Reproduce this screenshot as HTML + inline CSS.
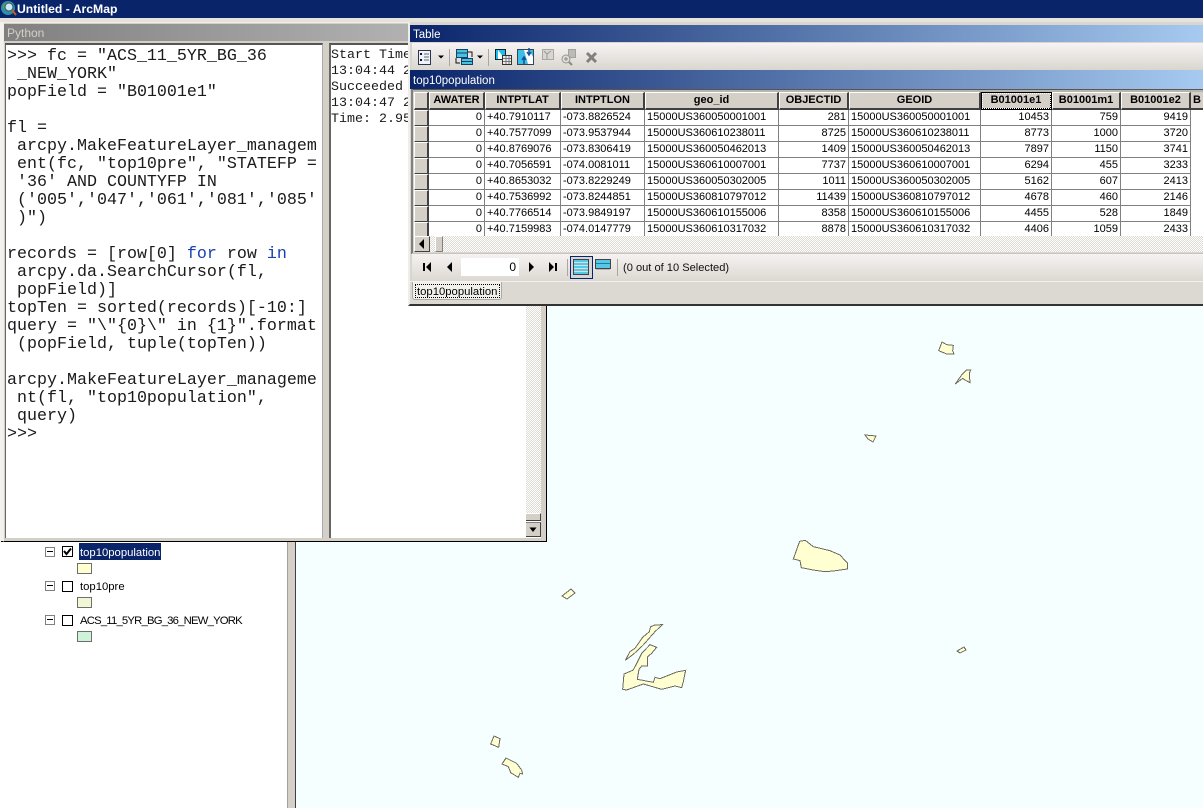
<!DOCTYPE html>
<html><head><meta charset="utf-8"><style>
html,body{margin:0;padding:0;width:1203px;height:808px;overflow:hidden;background:#fff}
*{box-sizing:border-box}
.a{position:absolute}
body{font-family:"Liberation Sans",sans-serif;position:relative;color:#000}
pre{margin:0;font-family:"Liberation Mono",monospace;color:#1a1a1a}
.dith{background-color:#fff;background-image:conic-gradient(#dedbd4 25%,#fff 0 50%,#dedbd4 0 75%,#fff 0);background-size:2px 2px}
table{border-collapse:separate;border-spacing:0;table-layout:fixed;font-size:11px;position:absolute;left:0;top:0;width:777px}
td,th{height:16px;padding:0 2px;overflow:hidden;white-space:nowrap;border-right:1px solid #808080;border-bottom:1px solid #808080;background:#fff;font-weight:normal;line-height:15px}
td.r{text-align:right}
th{height:18px;background:#d4d0c8;font-weight:bold;border-right:2px solid #404040;border-bottom:2px solid #404040;border-top:1px solid #fff;border-left:1px solid #fff;text-align:center;padding:0;line-height:15px}
td.s{background:#d4d0c8;border-right:2px solid #404040;border-bottom:1px solid #404040;border-top:1px solid #fff;border-left:1px solid #fff;padding:0}
.sw{position:absolute;left:77px;width:15px;height:11px;border:1px solid #6e6e6e}
.mn{position:absolute;left:45px;width:10px;height:10px;border:1px solid #808080;background:#fff}
.mn:after{content:"";position:absolute;left:1px;top:3px;width:6px;height:1px;background:#000}
.cb{position:absolute;left:62px;width:11px;height:11px;border:1px solid #000;background:#fff}
.tl{position:absolute;left:80px;font-size:11.3px;line-height:16px;white-space:nowrap}
</style></head><body>

<!-- map -->
<div class="a" style="left:296px;top:300px;width:907px;height:508px;background:#f6ffff"></div>
<div class="a" style="left:287px;top:300px;width:1px;height:508px;background:#a0a0a0"></div>
<div class="a" style="left:288px;top:300px;width:7px;height:508px;background:#d4d0c8"></div>
<div class="a" style="left:295px;top:300px;width:1px;height:508px;background:#404040"></div>
<svg class="a" style="left:0;top:0" width="1203" height="808" fill="#ffffd2" stroke="#6b6b60" stroke-width="1" shape-rendering="crispEdges">
<g transform="translate(600,520) scale(.3333)" stroke-width="3">
<polygon points="599,64 616,61 640,80 690,92 720,105 743,130 742,147 700,153 675,155 640,150 604,143 600,122 580,117"/>
<polygon points="76,421 90,395 105,385 128,352 148,335 152,320 165,315 187,314 165,335 130,375 100,403"/>
<polygon points="150,374 170,382 155,400 143,410 143,438 125,438 117,448 112,478 160,487 165,472 180,476 230,456 257,451 250,485 245,503 225,498 185,508 130,492 80,510 68,508 72,462 100,450 125,400"/>
</g>
<g transform="translate(470,720) scale(.3333)" stroke-width="3">
<polygon points="72,48 90,56 86,82 62,72"/>
<polygon points="108,114 140,130 155,150 158,162 150,160 145,172 122,158 115,140 96,132"/>
</g>
<g transform="translate(920,330) scale(.3333)" stroke-width="3">
<polygon points="66,36 80,44 100,46 98,62 102,72 80,72 56,62"/>
<polygon points="106,162 125,135 140,120 152,120 148,130 150,158 135,150 128,145"/>
</g>
<polygon points="865,435 876,436 873,442 868,439"/>
<polygon points="562,596 571,589 575,593 567,599"/>
<polygon points="957,651 964,647 966,650 960,653"/>
</svg>

<!-- TOC -->
<div class="mn" style="top:547px"></div>
<div class="cb" style="top:546px"><svg width="9" height="9" style="display:block"><path d="M1 4l2.500 3L8 1.500" fill="none" stroke="#000" stroke-width="2"/></svg></div>
<div class="a" style="left:79px;top:543px;width:82px;height:17px;background:#0a246a"></div>
<div class="tl" style="top:545px;color:#fff">top10population</div>
<div class="sw" style="top:563px;background:#ffffd2"></div>
<div class="mn" style="top:581px"></div><div class="cb" style="top:581px"></div>
<div class="tl" style="top:579px">top10pre</div>
<div class="sw" style="top:597px;background:#f1f7d4"></div>
<div class="mn" style="top:615px"></div><div class="cb" style="top:615px"></div>
<div class="tl" style="top:613px;letter-spacing:-.8px">ACS_11_5YR_BG_36_NEW_YORK</div>
<div class="sw" style="top:631px;background:#cdf3d9"></div>

<!-- app title -->
<div class="a" style="left:0;top:0;width:1203px;height:18px;background:#0a246a"></div>
<div class="a" style="left:17px;top:1px;color:#fff;font-weight:bold;font-size:12.2px;line-height:16px">Untitled - ArcMap</div>
<svg class="a" style="left:0;top:0" width="18" height="18">
<circle cx="8" cy="8" r="7" fill="#2f8fa8"/><path d="M3 5q3-3 6-2l1 4-4 3-3-2z" fill="#5aa05a"/><circle cx="9" cy="7" r="4" fill="#cfe8f0" stroke="#33506a"/><path d="M12 10l4 5" stroke="#c06020" stroke-width="2"/>
</svg>
<div class="a" style="left:0;top:18px;width:1203px;height:282px;background:#e6e3dc"></div>
<div class="a" style="left:0;top:22px;width:3px;height:520px;background:#f4f2ee"></div>
<div class="a" style="left:1px;top:541px;width:546px;height:1px;background:#000"></div>

<!-- python window -->
<div class="a" style="left:3px;top:22px;width:544px;height:520px;background:#d4d0c8;border-right:1px solid #000;border-bottom:1px solid #000;border-left:1px solid #f0eee8;border-top:1px solid #f0eee8"></div>
<div class="a" style="left:4px;top:24px;width:541px;height:17px;background:linear-gradient(90deg,#808080,#c2c2c2)"></div>
<div class="a" style="left:7px;top:25px;color:#d4d0c8;font-size:12px;line-height:16px">Python</div>
<div class="a" style="left:5px;top:43px;width:318px;height:495px;background:#fff;border-top:2px solid #555;border-left:1px solid #666;border-right:1px solid #aaa"></div>
<pre class="a" style="left:7px;top:48px;font-size:16.67px;line-height:18px">&gt;&gt;&gt; fc = "ACS_11_5YR_BG_36
 _NEW_YORK"
popField = "B01001e1"

fl =
 arcpy.MakeFeatureLayer_managem
 ent(fc, "top10pre", "STATEFP =
 '36' AND COUNTYFP IN
 ('005','047','061','081','085'
 )")

records = [row[0] <span style="color:#1a3fb0">for</span> row <span style="color:#1a3fb0">in</span>
 arcpy.da.SearchCursor(fl,
 popField)]
topTen = sorted(records)[-10:]
query = "\"{0}\" in {1}".format
 (popField, tuple(topTen))

arcpy.MakeFeatureLayer_manageme
 nt(fl, "top10population",
 query)
&gt;&gt;&gt;</pre>
<div class="a" style="left:329px;top:43px;width:212px;height:495px;background:#fff;border-top:2px solid #555;border-left:2px solid #666"></div>
<pre class="a" style="left:331px;top:48px;font-size:13.33px;line-height:16px">Start Time
13:04:44 2
Succeeded
13:04:47 2
Time: 2.95</pre>
<div class="a dith" style="left:526px;top:300px;width:15px;height:213px"></div>
<div class="a" style="left:526px;top:513px;width:15px;height:8px;background:#d4d0c8;border-right:1px solid #404040;border-bottom:1px solid #404040;border-top:1px solid #fff"></div>
<div class="a" style="left:526px;top:522px;width:15px;height:15px;background:#d4d0c8;border-right:1px solid #404040;border-bottom:1px solid #404040;border-top:1px solid #808080"></div>
<svg class="a" style="left:526px;top:522px" width="15" height="15"><path d="M3.500 5.500h7L7 10z" fill="#000"/></svg>

<!-- table window -->
<div class="a" style="left:408px;top:22px;width:795px;height:284px;background:#d9d6cf;border-left:2px solid #f0eee8;border-bottom:2px solid #333"></div>
<div class="a" style="left:410px;top:25px;width:793px;height:17px;background:linear-gradient(90deg,#0a246a,#a6caf0)"></div>
<div class="a" style="left:413px;top:28px;color:#fff;font-size:11.500px;line-height:15px">Table</div>
<div class="a" style="left:412px;top:43px;width:791px;height:27px;background:linear-gradient(#f8f3f4,#d9d6cf)"></div>
<div class="a" style="left:410px;top:70px;width:793px;height:19px;background:linear-gradient(90deg,#0a246a,#a6caf0)"></div>
<div class="a" style="left:413px;top:74px;color:#fff;font-size:11.500px;line-height:15px">top10population</div>
<div class="a" style="left:411px;top:89px;width:792px;height:1px;background:#555"></div>
<div class="a" style="left:413px;top:90px;width:790px;height:2px;background:#b8b5ae"></div>
<div class="a" style="left:411px;top:89px;width:2px;height:165px;background:#808080"></div>

<!-- grid -->
<div class="a" style="left:414px;top:92px;width:789px;height:144px;overflow:hidden;background:#fff">
<table>
<colgroup><col style="width:15px"><col style="width:56px"><col style="width:76px"><col style="width:84px"><col style="width:134px"><col style="width:70px"><col style="width:132px"><col style="width:71px"><col style="width:69px"><col style="width:70px"></colgroup>
<tr><th></th><th>AWATER</th><th>INTPTLAT</th><th>INTPTLON</th><th>geo_id</th><th>OBJECTID</th><th>GEOID</th><th style="outline:1px dotted #fff;outline-offset:-2px;border:1px solid #000;border-right:2px solid #000;border-bottom:2px solid #000">B01001e1</th><th>B01001m1</th><th>B01001e2</th></tr>
<tr><td class="s"></td><td class="r">0</td><td>+40.7910117</td><td>-073.8826524</td><td>15000US360050001001</td><td class="r">281</td><td>15000US360050001001</td><td class="r">10453</td><td class="r">759</td><td class="r">9419</td></tr>
<tr><td class="s"></td><td class="r">0</td><td>+40.7577099</td><td>-073.9537944</td><td>15000US360610238011</td><td class="r">8725</td><td>15000US360610238011</td><td class="r">8773</td><td class="r">1000</td><td class="r">3720</td></tr>
<tr><td class="s"></td><td class="r">0</td><td>+40.8769076</td><td>-073.8306419</td><td>15000US360050462013</td><td class="r">1409</td><td>15000US360050462013</td><td class="r">7897</td><td class="r">1150</td><td class="r">3741</td></tr>
<tr><td class="s"></td><td class="r">0</td><td>+40.7056591</td><td>-074.0081011</td><td>15000US360610007001</td><td class="r">7737</td><td>15000US360610007001</td><td class="r">6294</td><td class="r">455</td><td class="r">3233</td></tr>
<tr><td class="s"></td><td class="r">0</td><td>+40.8653032</td><td>-073.8229249</td><td>15000US360050302005</td><td class="r">1011</td><td>15000US360050302005</td><td class="r">5162</td><td class="r">607</td><td class="r">2413</td></tr>
<tr><td class="s"></td><td class="r">0</td><td>+40.7536992</td><td>-073.8244851</td><td>15000US360810797012</td><td class="r">11439</td><td>15000US360810797012</td><td class="r">4678</td><td class="r">460</td><td class="r">2146</td></tr>
<tr><td class="s"></td><td class="r">0</td><td>+40.7766514</td><td>-073.9849197</td><td>15000US360610155006</td><td class="r">8358</td><td>15000US360610155006</td><td class="r">4455</td><td class="r">528</td><td class="r">1849</td></tr>
<tr><td class="s"></td><td class="r">0</td><td>+40.7159983</td><td>-074.0147779</td><td>15000US360610317032</td><td class="r">8878</td><td>15000US360610317032</td><td class="r">4406</td><td class="r">1059</td><td class="r">2433</td></tr>
</table>
<div class="a" style="left:777px;top:0;width:12px;height:18px;background:#d4d0c8;font:bold 11px 'Liberation Sans',sans-serif;padding-left:2px;line-height:16px;overflow:hidden;border-bottom:2px solid #404040">B</div>
</div>

<!-- h scrollbar -->
<div class="a dith" style="left:414px;top:236px;width:789px;height:16px"></div>
<div class="a" style="left:414px;top:236px;width:16px;height:16px;background:#d4d0c8;border:1px solid #404040;border-top-color:#fff;border-left-color:#fff"></div>
<div class="a" style="left:435px;top:236px;width:8px;height:16px;background:#d4d0c8;border:1px solid #808080;border-top-color:#fff;border-left-color:#fff"></div>

<!-- nav bar -->
<div class="a" style="left:412px;top:253px;width:791px;height:28px;background:linear-gradient(#f6f2f2,#dcd9d2);border-top:1px solid #c8c5be"></div>
<div class="a" style="left:461px;top:258px;width:58px;height:18px;background:#fff;font-size:12px;text-align:right;padding-right:3px;line-height:18px">0</div>
<div class="a" style="left:623px;top:261px;font-size:11.100px;line-height:14px;color:#111;white-space:nowrap">(0 out of 10 Selected)</div>
<div class="a" style="left:570px;top:256px;width:23px;height:23px;border:1px solid #0a246a;background:#d6d6d6"></div>

<!-- tab area -->
<div class="a" style="left:410px;top:281px;width:793px;height:23px;background:#dcd9d2;border-top:1px solid #f4f2ee"></div>
<div class="a" style="left:412px;top:282px;width:90px;height:18px;background:#f3f1ec;border:1px solid #aaa;border-top:none;border-radius:0 0 3px 3px"></div>
<div class="a" style="left:415px;top:284px;width:85px;height:14px;border:1px dotted #000;font-size:11.300px;line-height:14px;padding-left:1px;white-space:nowrap;overflow:hidden">top10population</div>

<!-- icons -->
<svg class="a" style="left:0;top:0" width="1203" height="300">
<rect x="418.500" y="50.500" width="12" height="14" fill="#eef3fa" stroke="#2a3550"/>
<path d="M420 54h2M420 60h2" stroke="#111" stroke-width="2"/><path d="M424 54h5M424 60h5M424 57h5" stroke="#667"/>
<path d="M438 55.500h6l-3 3z"/>
<path d="M449.500 49v17M488.500 49v17M567.500 259v17M617.500 259v17" stroke="#a8a6a0"/>
<rect x="456.500" y="49.500" width="11" height="8" fill="#49c2e0" stroke="#14406a"/>
<rect x="461.500" y="58.500" width="11" height="6" fill="#49c2e0" stroke="#14406a"/>
<path d="M457 53h10M462 61.500h10" stroke="#14406a"/>
<path d="M468 52h4v5M456 58v5h4" fill="none" stroke="#111"/>
<path d="M477 55.500h6l-3 3z"/>
<path d="M495.500 49.500h10v10h-10z" fill="#1ec0ea" stroke="#123"/><path d="M498 50l7 9h-7z" fill="#fff"/>
<rect x="502.500" y="55.500" width="9" height="9" fill="#eee" stroke="#333"/><path d="M503 58.500h8M503 61.500h8M506 56v8M509 56v8" stroke="#777"/>
<path d="M517.500 49.500h16v15h-16z" fill="#fff" stroke="#345"/><path d="M518 50l6 0 4 14-10 0z" fill="#3bbfe4"/><path d="M529 50h4v7z" fill="#3bbfe4"/>
<path d="M522 60l2-3 2 3M524 58v6M527 52l2 3 2-3M529 48v6" fill="none" stroke="#14509a" stroke-width="1.500"/>
<rect x="542.500" y="49.500" width="11" height="10" fill="#d8d6d0" stroke="#a9a7a1"/><path d="M544 51l3 3 4-3M547 54v5" fill="none" stroke="#9a9892"/>
<rect x="568.500" y="49.500" width="7" height="8" fill="#bdbbb5" stroke="#a3a19b"/><circle cx="566" cy="59" r="4" fill="#e0ded8" stroke="#989690"/><path d="M564 59h4M566 57v4" stroke="#888"/><path d="M569 62l3 3" stroke="#8c8a84" stroke-width="2"/>
<path d="M587 53l9 9M596 53l-9 9" stroke="#82807c" stroke-width="3"/>
<path d="M424 239v10l-5-5z"/>
<path d="M423 263h2v8h-2zM431 262v10l-5-5zM452 262v10l-5-5zM529 262v10l5-5zM549 262v10l5-5zM555 263h2v8h-2z"/>
<rect x="573.500" y="259.500" width="15" height="15" fill="#55c8e8" stroke="#444"/>
<path d="M574 262.500h14M574 265.500h14M574 268.500h14M574 271.500h14" stroke="#ddd"/>
<rect x="595.500" y="259.500" width="15" height="9" fill="#55c8e8" stroke="#444"/>
<path d="M596 263.500h14" stroke="#2a7a90"/><path d="M596 269.500h14" stroke="#b8b6b0"/>
</svg>
</body></html>
